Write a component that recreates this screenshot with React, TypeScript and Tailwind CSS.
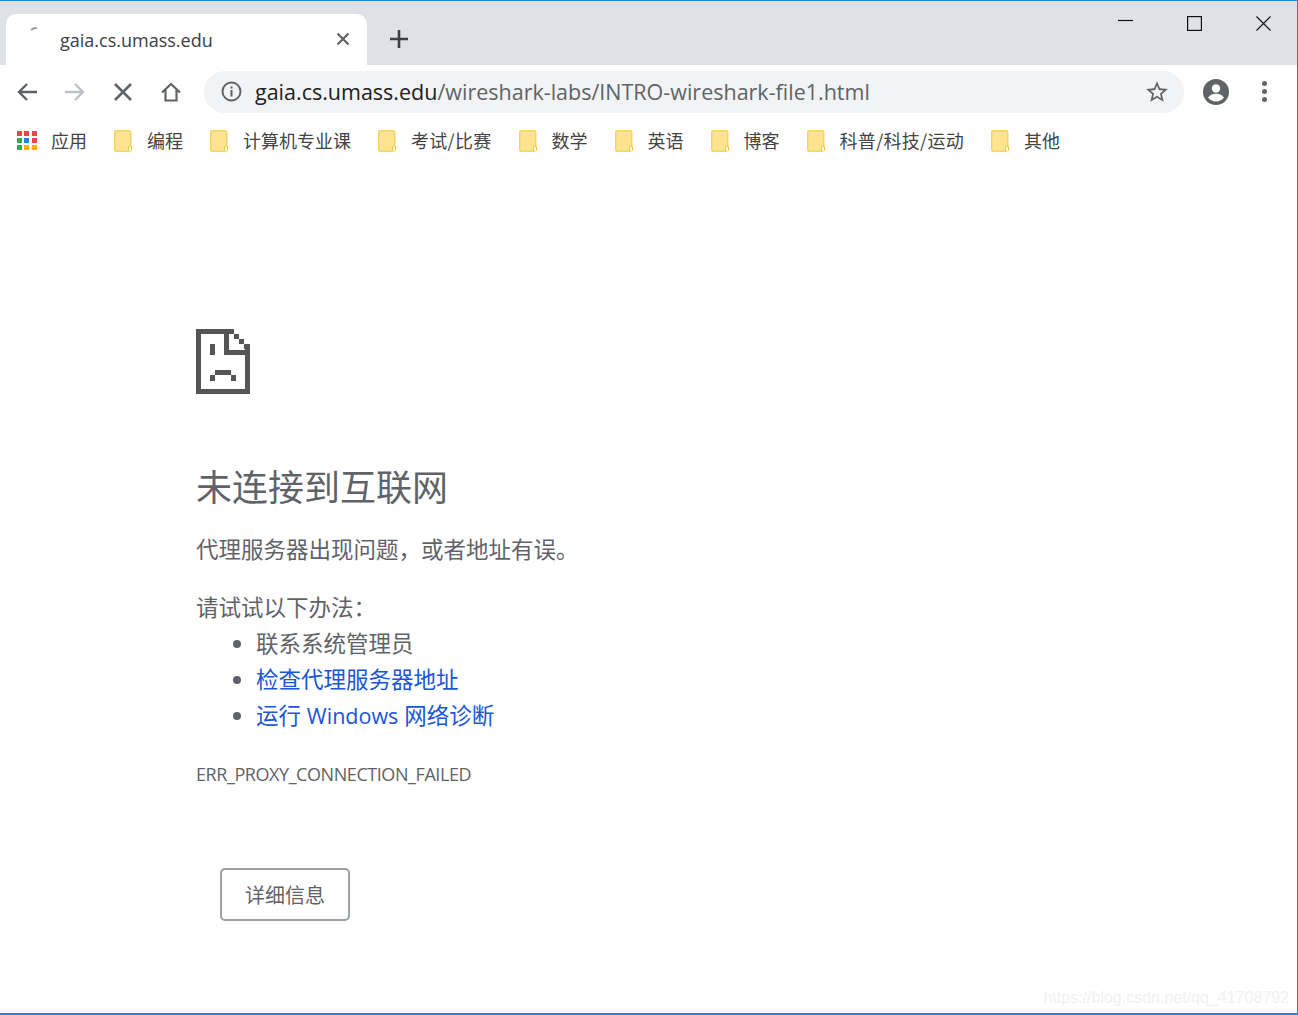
const bookmarks = ['编程', '计算机专业课', '考试/比赛', '数学', '英语', '博客', '科普/科技/运动', '其他']

const appColors = ['#ef4444', '#ef4444', '#ef4444', '#34a853', '#1a84f0', '#ef4444', '#34a853', '#fbab0a', '#fbab0a']

function Folder() {
  return (
    <svg width="19" height="22" viewBox="0 0 19 22" className="shrink-0">
      <rect x="0.75" y="0.75" width="16" height="20.5" rx="1.5" fill="#ffe48f" stroke="#f6d362" strokeWidth="1.5" />
      <path d="M14.5 21v-3.5a1.5 1.5 0 0 1 3 0V21" fill="#fff" stroke="#f0c64c" strokeWidth="1.2" />
    </svg>
  )
}

function SadFile() {
  return (
    <svg width="54" height="65" viewBox="0 0 54 65" fill="#555" shapeRendering="crispEdges">
      <rect x="0" y="0" width="5" height="65" />
      <rect x="0" y="0" width="38" height="5" />
      <rect x="0" y="60" width="54" height="5" />
      <rect x="49" y="15" width="5" height="50" />
      <rect x="28" y="0" width="5" height="26" />
      <rect x="28" y="21" width="26" height="5" />
      <rect x="38" y="5" width="5" height="5" />
      <rect x="43" y="10" width="5" height="5" />
      <rect x="48" y="15" width="5" height="5" />
      <rect x="14" y="15" width="5" height="11" />
      <rect x="19" y="41" width="16" height="5" />
      <rect x="14" y="46" width="5" height="6" />
      <rect x="35" y="46" width="5" height="6" />
    </svg>
  )
}

export default function App() {
  return (
    <div className="relative w-[1298px] h-[1015px] overflow-hidden bg-white border-t border-r border-b-2 border-[#1f86d0] font-['Open_Sans','Noto_Sans_CJK_SC',sans-serif]">
      {/* Tab strip */}
      <div className="h-[64px] bg-[#dee1e6] flex items-end pl-[6px]">
        <div className="relative w-[361px] h-[51px] bg-white rounded-t-[10px] flex items-center pl-[54px] pr-[17px]">
          <svg width="8" height="4" viewBox="0 0 8 4" className="absolute left-[24px] top-[13px]">
            <path d="M1 3 Q3 1 7 1" stroke="#9aa0a6" strokeWidth="2" fill="none" />
          </svg>
          <span className="text-[18px] text-[#3c4043] flex-1 mt-[2px]">gaia.cs.umass.edu</span>
          <svg width="14" height="14" viewBox="0 0 14 14" className="-mt-[2px]" stroke="#5f6368" strokeWidth="2.2" fill="none">
            <path d="M1.5 1.5l11 11M12.5 1.5l-11 11" />
          </svg>
        </div>
        <svg width="18" height="18" viewBox="0 0 18 18" className="ml-[23px] mb-[17px]" stroke="#3c4043" strokeWidth="2.6" fill="none">
          <path d="M9 0v18M0 9h18" />
        </svg>
        <div className="ml-auto self-start flex items-center mt-[15px] pr-[26px] gap-[54px]">
          <svg width="15" height="15" viewBox="0 0 15 15" stroke="#111" strokeWidth="1.2" fill="none">
            <path d="M0 7.5h15" transform="translate(0 -3)" />
          </svg>
          <svg width="15" height="15" viewBox="0 0 15 15" stroke="#111" strokeWidth="1.2" fill="none">
            <rect x="0.6" y="0.6" width="13.8" height="13.8" />
          </svg>
          <svg width="15" height="15" viewBox="0 0 15 15" stroke="#111" strokeWidth="1.1" fill="none">
            <path d="M0.5 0.5l14 14M14.5 0.5l-14 14" />
          </svg>
        </div>
      </div>

      {/* Toolbar */}
      <div className="h-[53px] flex items-center pl-[16px]">
        <svg width="22" height="20" viewBox="0 0 22 20" stroke="#5f6368" strokeWidth="2.4" fill="none">
          <path d="M21 10H3M11 2l-8 8 8 8" />
        </svg>
        <svg width="22" height="20" viewBox="0 0 22 20" className="ml-[26px]" stroke="#bdc1c6" strokeWidth="2.4" fill="none">
          <path d="M1 10h18M11 2l8 8-8 8" />
        </svg>
        <svg width="20" height="20" viewBox="0 0 20 20" className="ml-[27px]" stroke="#5f6368" strokeWidth="2.6" fill="none">
          <path d="M2 2l16 16M18 2L2 18" />
        </svg>
        <svg width="20" height="20" viewBox="0 0 20 20" className="ml-[28px]" stroke="#5f6368" strokeWidth="2.2" fill="none">
          <path d="M1 10.500L10 2l9 8.500M4.500 8v10.500h11V8" />
        </svg>
        <div className="ml-[23px] w-[980px] h-[42px] rounded-full bg-[#f1f3f4] flex items-center pl-[17px] pr-[14px]">
          <svg width="21" height="21" viewBox="0 0 21 21" fill="none" className="shrink-0">
            <circle cx="10.500" cy="10.500" r="9" stroke="#5f6368" strokeWidth="2" />
            <rect x="9.500" y="9" width="2" height="6.500" fill="#5f6368" />
            <rect x="9.500" y="5.500" width="2" height="2" fill="#5f6368" />
          </svg>
          <span className="ml-[13px] mt-[2px] text-[21.500px] text-[#202124] flex-1 whitespace-nowrap">
            gaia.cs.umass.edu<span className="text-[#5f6368]">/wireshark-labs/INTRO-wireshark-file1.html</span>
          </span>
          <svg width="26" height="26" viewBox="0 0 24 24" fill="#5f6368">
            <path d="M22 9.240l-7.190-.620L12 2 9.190 8.630 2 9.240l5.460 4.730L5.820 21 12 17.270 18.180 21l-1.630-7.030L22 9.240zM12 15.400l-3.760 2.270 1-4.280-3.320-2.880 4.380-.380L12 6.100l1.710 4.040 4.380.380-3.320 2.880 1 4.280L12 15.400z" />
          </svg>
        </div>
        <svg width="26" height="26" viewBox="0 0 26 26" className="ml-[19px]">
          <circle cx="13" cy="13" r="13" fill="#5f6368" />
          <circle cx="13" cy="9.500" r="4.200" fill="#fff" />
          <path d="M5 18.500c2-2.800 5-3.800 8-3.800s6 1 8 3.800c-2 2.600-5 4-8 4s-6-1.400-8-4z" fill="#fff" />
        </svg>
        <div className="ml-[33px] flex flex-col gap-[3px]">
          <span className="w-[5px] h-[5px] rounded-full bg-[#5f6368]" />
          <span className="w-[5px] h-[5px] rounded-full bg-[#5f6368]" />
          <span className="w-[5px] h-[5px] rounded-full bg-[#5f6368]" />
        </div>
      </div>

      {/* Bookmarks */}
      <div className="h-[47px] flex items-center pl-[17px] pb-[2px] text-[18px] text-[#444] font-['Noto_Sans_CJK_SC',sans-serif]">
        <div className="grid grid-cols-3 gap-[2px] w-[20px] shrink-0">
          {appColors.map((c, i) => (
            <span key={i} className="w-[5px] h-[5px]" style={{ backgroundColor: c }} />
          ))}
        </div>
        <span className="ml-[14px]">应用</span>
        {bookmarks.map(name => (
          <div key={name} className="flex items-center ml-[27px] gap-[14px]">
            <Folder />
            <span className={name.includes('/') ? 'whitespace-nowrap tracking-[0.3px]' : 'whitespace-nowrap'}>{name}</span>
          </div>
        ))}
      </div>

      {/* Error page */}
      <main className="pl-[196px] pt-[164px] text-[#5f6368] font-['Open_Sans','Noto_Sans_CJK_SC',sans-serif]">
        <SadFile />
        <h1 className="mt-[70px] text-[36px] leading-[48px] text-[#5f6368] font-normal">未连接到互联网</h1>
        <p className="mt-[20px] text-[22.500px] leading-[36px]">代理服务器出现问题，或者地址有误。</p>
        <p className="mt-[22px] text-[22.500px] leading-[36px]">请试试以下办法：</p>
        <ul className="list-disc pl-[60px] text-[22.500px] leading-[36px] marker:text-[#5f6368]">
          <li>联系系统管理员</li>
          <li className="text-[#1a56d6]">检查代理服务器地址</li>
          <li className="text-[#1a56d6]">运行 <span className="text-[21.500px]">Windows</span> 网络诊断</li>
        </ul>
        <p className="mt-[28px] text-[18px] leading-[24px] tracking-[-0.43px]">ERR_PROXY_CONNECTION_FAILED</p>
        <button className="mt-[82px] ml-[24px] w-[130px] h-[53px] pt-[2px] rounded-[5px] border-2 border-[#9aa0a6] bg-white text-[20px] text-[#5f6368]">
          详细信息
        </button>
      </main>

      <span className="absolute right-[8px] bottom-[3px] text-[16px] text-[#f1f1f1] font-['Liberation_Sans',sans-serif]">
        https://blog.csdn.net/qq_41708792
      </span>
    </div>
  )
}
